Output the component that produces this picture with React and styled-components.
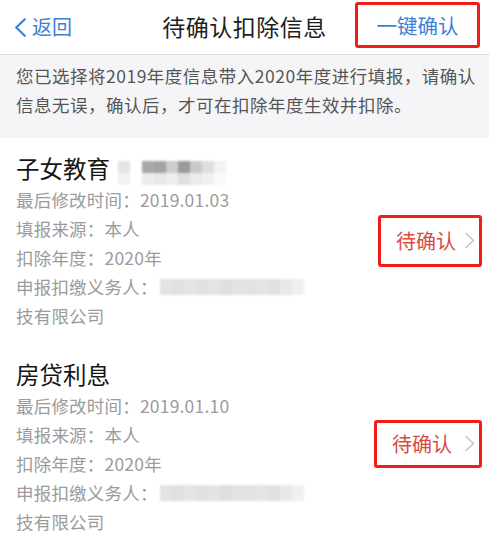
import React from "react";
import styled, { createGlobalStyle } from "styled-components";

const Global = createGlobalStyle`
  html, body { margin: 0; padding: 0; background: #fff; }
  body { font-family: "Noto Sans CJK SC", "Noto Sans", sans-serif; }
  * { box-sizing: border-box; }
`;

const Page = styled.div`
  width: 489px;
  height: 547px;
  overflow: hidden;
  background: #fff;
`;

const Header = styled.header`
  height: 55px;
  display: grid;
  grid-template-columns: 1fr auto 1fr;
  align-items: center;
  border-bottom: 1px solid #dcdce0;
`;

const Back = styled.div`
  display: flex;
  align-items: center;
  gap: 5px;
  padding-left: 14px;
  color: #3f7fd8;
  font-size: 20px;
  line-height: 24px;
`;

const Title = styled.h1`
  margin: 0;
  font-size: 23px;
  font-weight: 400;
  color: #1e1e1e;
  line-height: 28px;
  margin-top: -2px;
  letter-spacing: 0.5px;
`;

const RightCell = styled.div`
  display: flex;
  justify-content: flex-end;
  align-self: start;
  padding-top: 2px;
  padding-right: 9px;
`;

const Outline = styled.div`
  border: 3px solid #f41b1b;
  border-radius: 3px;
  display: flex;
  align-items: center;
`;

const ConfirmAll = styled(Outline)`
  width: 125px;
  height: 46px;
  justify-content: center;
  color: #3f7fd8;
  font-size: 20.5px;
  line-height: 24px;
`;

const Notice = styled.div`
  background: #f5f5f7;
  padding: 6px 8px 19px 16px;
  color: #555;
  font-size: 17.5px;
  line-height: 29px;
  letter-spacing: 0.5px;
  white-space: nowrap;
`;

const Section = styled.section`
  display: flex;
  align-items: center;
  justify-content: space-between;
  padding: ${(p) => p.$top}px 7px 15px 16px;
`;

const Info = styled.div`
  display: flex;
  flex-direction: column;
`;

const ItemTitle = styled.div`
  display: flex;
  align-items: center;
  font-size: 23.5px;
  line-height: 30px;
  color: #151515;
  margin-top: -2px;
  margin-bottom: 2px;
`;

const Line = styled.div`
  display: flex;
  align-items: center;
  font-size: 17.5px;
  line-height: 29px;
  color: #9b9b9b;
  letter-spacing: 0.2px;
`;

const Mosaic = styled.span`
  display: inline-grid;
  grid-template-columns: repeat(${(p) => p.$cols}, ${(p) => p.$cell}px);
  grid-auto-rows: ${(p) => p.$rowH}px;
  margin-left: ${(p) => p.$ml}px;
  margin-top: ${(p) => p.$shift || 0}px;
  margin-bottom: ${(p) => -(p.$shift || 0)}px;
  filter: blur(1.2px);
`;

const Cell = styled.span`
  background: ${(p) => p.$c};
`;

const Status = styled(Outline)`
  width: ${(p) => p.$w}px;
  height: ${(p) => p.$h}px;
  padding: 0 3px 0 15px;
  justify-content: space-between;
  color: #d84a3f;
  font-size: 20px;
  line-height: 24px;
  margin-top: ${(p) => p.$mt}px;
`;

const Chevron = ({ color, w, h, sw }) => (
  <svg width={w} height={h} viewBox={`0 0 ${w} ${h}`} fill="none">
    <polyline
      points={`${w - sw},${sw} ${sw},${h / 2} ${w - sw},${h - sw}`}
      stroke={color}
      strokeWidth={sw}
      strokeLinecap="round"
      strokeLinejoin="round"
    />
  </svg>
);

const ChevronRight = () => (
  <svg width="12" height="17" viewBox="0 0 12 17" fill="none">
    <polyline points="2,1.5 9.5,8.5 2,15.5" stroke="#c5c5c9" strokeWidth="1.6" strokeLinecap="round" strokeLinejoin="round" />
  </svg>
);

const titleTop = ["#e4e4e4", "#fff", "#a9a9a9", "#a3a3a3", "#cdcdcd", "#9a9a9a", "#c9c9c9", "#dedede", "#f2f2f2"];
const titleBot = ["#f2f2f2", "#fff", "#ececec", "#e8e8e8", "#eeeeee", "#e0e0e0", "#ebebeb", "#f0f0f0", "#fafafa"];
const lineCells = ["#e3e3e3", "#e0e0e0", "#e5e5e5", "#e1e1e1", "#e4e4e4", "#dfdfdf", "#e3e3e3", "#e2e2e2", "#e5e5e5", "#e1e1e1", "#e8e8e8", "#f0f0f0"];

const TitleBlur = () => (
  <Mosaic $cols={9} $cell={12} $rowH={12} $ml={8} $shift={5}>
    {titleTop.map((c, i) => <Cell key={"t" + i} $c={c} />)}
    {titleBot.map((c, i) => <Cell key={"b" + i} $c={c} />)}
  </Mosaic>
);

const LineBlur = () => (
  <Mosaic $cols={12} $cell={12} $rowH={16} $ml={2}>
    {lineCells.map((c, i) => <Cell key={i} $c={c} />)}
  </Mosaic>
);

const items = [
  { title: "子女教育", blur: true, date: "2019.01.03", top: 17, box: { w: 104, h: 52, mt: -4 } },
  { title: "房贷利息", blur: false, date: "2019.01.10", top: 16, box: { w: 108, h: 48, mt: -10 } },
];

export default function App() {
  return (
    <Page>
      <Global />
      <Header>
        <Back>
          <Chevron color="#3f7fd8" w={13} h={21} sw={2.2} />
          <span>返回</span>
        </Back>
        <Title>待确认扣除信息</Title>
        <RightCell>
          <ConfirmAll>一键确认</ConfirmAll>
        </RightCell>
      </Header>
      <Notice>
        您已选择将2019年度信息带入2020年度进行填报，请确认
        <br />
        信息无误，确认后，才可在扣除年度生效并扣除。
      </Notice>
      {items.map((it) => (
        <Section key={it.title} $top={it.top}>
          <Info>
            <ItemTitle>
              {it.title}
              {it.blur && <TitleBlur />}
            </ItemTitle>
            <Line>最后修改时间：{it.date}</Line>
            <Line>填报来源：本人</Line>
            <Line>扣除年度：2020年</Line>
            <Line>
              申报扣缴义务人：
              <LineBlur />
            </Line>
            <Line>技有限公司</Line>
          </Info>
          <Status $w={it.box.w} $h={it.box.h} $mt={it.box.mt}>
            <span>待确认</span>
            <ChevronRight />
          </Status>
        </Section>
      ))}
    </Page>
  );
}
